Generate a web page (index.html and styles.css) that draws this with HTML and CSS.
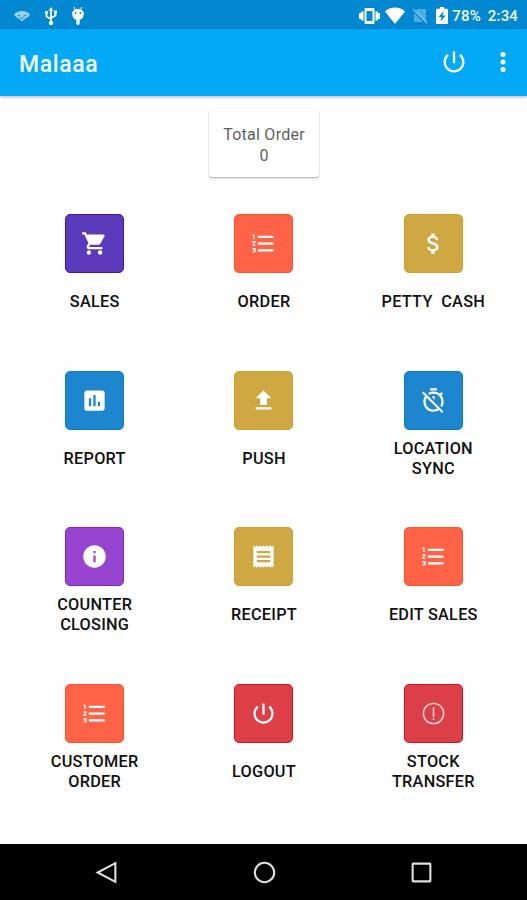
FILE: index.html
```html
<!DOCTYPE html>
<html lang="en">
<head>
  <meta charset="utf-8">
  <meta name="viewport" content="width=device-width, initial-scale=1">
  <title>Malaaa</title>
  <link rel="stylesheet" href="styles.css">
</head>
<body>
  <svg class="defs" width="0" height="0">
    <symbol id="power" viewBox="0 0 24 24"><path d="M13 3h-2v10h2V3zm4.83 2.17l-1.42 1.42C17.99 7.86 19 9.81 19 12c0 3.87-3.13 7-7 7s-7-3.13-7-7c0-2.19 1.01-4.14 2.58-5.42L6.17 5.17C4.23 6.82 3 9.26 3 12c0 4.97 4.03 9 9 9s9-4.03 9-9c0-2.74-1.23-5.18-3.17-6.83z"/></symbol>
    <symbol id="list" viewBox="0 0 24 24"><path d="M2 17h2v.5H3v1h1v.5H2v1h3v-4H2v1zm1-9h1V4H2v1h1v3zm-1 3h1.8L2 13.1v.9h3v-1H3.2L5 10.9V10H2v1zm5-6v2h14V5H7zm0 14h14v-2H7v2zm0-6h14v-2H7v2z"/></symbol>
  </svg>

  <div class="status-bar">
    <div class="status-left">
      <svg class="eye" width="18" height="14" viewBox="0 0 18 14"><path d="M1 5.5C4 .8 14 .8 17 5.5L14.5 8.5 12 9.5 9 12.5 6 9.5 3.5 8.5z"/><path class="eye-line" d="M5 6.2l2.500 1M13 6.2l-2.500 1M7.500 9.2h3"/></svg>
      <svg class="usb" width="14" height="20" viewBox="0 0 14 20"><path class="line" d="M7 4v13M2.5 6v4.5L7 13M11.5 6v3.5L7 12"/><path d="M7 1l2.4 4H4.6z"/><circle cx="7" cy="17" r="2.2"/><circle cx="2.5" cy="6.3" r="1.6"/><path d="M10 4.5h3v3h-3z"/></svg>
      <svg class="droid" width="14" height="20" viewBox="0 0 14 20"><path class="line thin" d="M3 1l1.5 3M11 1L9.5 4"/><path d="M1.2 7.5C1.2 1.5 12.8 1.5 12.8 7.5C12.8 11.5 10.5 13.5 8.7 13.5V18L7 19.2 5.3 18V13.5C3.5 13.5 1.2 11.5 1.2 7.5z"/><circle class="hole" cx="4.6" cy="7" r=".9"/><circle class="hole" cx="9.4" cy="7" r=".9"/></svg>
    </div>
    <div class="status-right">
      <svg class="vibrate" width="21" height="16" viewBox="0 0 21 16"><path d="M0 5h2v6H0zM2 3.500h2.500v9H2zM19 5h2v6h-2zM16.500 3.500H19v9h-2.500z"/><path fill-rule="evenodd" d="M6.5 0h8a1 1 0 0 1 1 1v14a1 1 0 0 1-1 1h-8a1 1 0 0 1-1-1V1a1 1 0 0 1 1-1zM7.5 3v10h6V3z"/></svg>
      <svg class="wifi" width="20" height="17" viewBox="0 0 20 17"><path d="M10 17L0 4.5C5-1 15-1 20 4.500z"/></svg>
      <svg class="no-sim" width="16" height="16" viewBox="0 0 16 16"><path class="faded" d="M5.5 1H14v12.5L3.5 3z"/><path class="faded" d="M2 5l9 9H2z"/><path class="line slash" d="M1 1l14 14"/></svg>
      <svg class="battery" width="12" height="17" viewBox="0 0 12 17"><path fill-rule="evenodd" d="M4 0h4v1.8h3a1 1 0 0 1 1 1V16a1 1 0 0 1-1 1H1a1 1 0 0 1-1-1V2.8a1 1 0 0 1 1-1h3zM7.6 4L2.5 10h3l-1 4.500L9.7 8.5h-3z"/></svg>
      <span class="percent">78%</span>
      <span class="clock">2:34</span>
    </div>
  </div>

  <header class="app-bar">
    <h1>Malaaa</h1>
    <svg class="action" width="28" height="28"><use href="#power"/></svg>
    <svg class="more" width="8" height="22" viewBox="0 0 8 22"><circle cx="4" cy="3.6" r="2.5"/><circle cx="4" cy="11" r="2.5"/><circle cx="4" cy="18.4" r="2.5"/></svg>
  </header>

  <main class="content">
    <div class="total-card">
      <div>Total Order</div>
      <div>0</div>
    </div>

    <div class="menu">
      <div class="menu-item">
        <div class="tile indigo"><svg viewBox="0 0 24 24"><path d="M7 18c-1.1 0-1.99.9-1.99 2S5.9 22 7 22s2-.9 2-2-.9-2-2-2zM1 2v2h2l3.6 7.59-1.35 2.45c-.16.28-.25.61-.25.96 0 1.1.9 2 2 2h12v-2H7.42c-.14 0-.25-.11-.25-.25l.03-.12.9-1.63h7.45c.75 0 1.41-.41 1.75-1.03l3.58-6.49A1 1 0 0 0 20 4H5.21l-.94-2H1zm16 16c-1.1 0-1.99.9-1.99 2s.89 2 1.99 2 2-.9 2-2-.9-2-2-2z"/></svg></div>
        <div class="label">SALES</div>
      </div>
      <div class="menu-item">
        <div class="tile orange"><svg><use href="#list"/></svg></div>
        <div class="label">ORDER</div>
      </div>
      <div class="menu-item">
        <div class="tile gold"><svg viewBox="0 0 24 24"><path d="M11.8 10.9c-2.27-.59-3-1.2-3-2.15 0-1.09 1.01-1.85 2.7-1.85 1.78 0 2.44.85 2.5 2.1h2.21c-.07-1.72-1.12-3.3-3.21-3.81V3h-3v2.16c-1.94.42-3.5 1.68-3.5 3.61 0 2.31 1.91 3.46 4.7 4.13 2.5.6 3 1.48 3 2.41 0 .69-.49 1.79-2.7 1.79-2.06 0-2.87-.92-2.98-2.1h-2.2c.12 2.19 1.76 3.42 3.68 3.83V21h3v-2.15c1.95-.37 3.5-1.5 3.5-3.55 0-2.84-2.43-3.81-4.7-4.4z"/></svg></div>
        <div class="label">PETTY&nbsp; CASH</div>
      </div>

      <div class="menu-item">
        <div class="tile blue"><svg viewBox="0 0 24 24"><path d="M19 3H5c-1.1 0-2 .9-2 2v14c0 1.1.9 2 2 2h14c1.1 0 2-.9 2-2V5c0-1.1-.9-2-2-2zM9 17H7v-7h2v7zm4 0h-2V7h2v10zm4 0h-2v-4h2v4z"/></svg></div>
        <div class="label">REPORT</div>
      </div>
      <div class="menu-item">
        <div class="tile gold"><svg viewBox="0 0 24 24"><path d="M9 16h6v-6h4l-7-7-7 7h4zm-4 2h14v2H5z"/></svg></div>
        <div class="label">PUSH</div>
      </div>
      <div class="menu-item">
        <div class="tile blue"><svg viewBox="0 0 24 24"><path d="M19.04 4.55l-1.42 1.42C16.07 4.74 14.12 4 12 4c-1.83 0-3.53.55-4.95 1.48l1.46 1.46C9.53 6.35 10.73 6 12 6c3.87 0 7 3.13 7 7 0 1.27-.35 2.47-.94 3.49l1.45 1.45C20.45 16.53 21 14.83 21 13c0-2.12-.74-4.07-1.97-5.61l1.42-1.42-1.41-1.42zM15 1H9v2h6V1zm-4 8.44l2 2V8h-2v1.44zM3.02 4L1.75 5.27 4.5 8.03C3.55 9.45 3 11.16 3 13c0 4.97 4.02 9 9 9 1.84 0 3.55-.55 4.98-1.5l2.5 2.5 1.27-1.27-7.71-7.71L3.02 4zM12 20c-3.87 0-7-3.13-7-7 0-1.28.35-2.48.95-3.52l9.56 9.56c-1.03.61-2.23.96-3.51.96z"/></svg></div>
        <div class="label">LOCATION<br>SYNC</div>
      </div>

      <div class="menu-item">
        <div class="tile violet"><svg viewBox="0 0 24 24"><path d="M12 2C6.48 2 2 6.48 2 12s4.48 10 10 10 10-4.48 10-10S17.52 2 12 2zm1 15h-2v-6h2v6zm0-8h-2V7h2v2z"/></svg></div>
        <div class="label">COUNTER<br>CLOSING</div>
      </div>
      <div class="menu-item">
        <div class="tile gold"><svg viewBox="0 0 24 24"><path d="M18 17H6v-2h12v2zm0-4H6v-2h12v2zm0-4H6V7h12v2zM3 22l1.5-1.5L6 22l1.5-1.5L9 22l1.5-1.5L12 22l1.5-1.5L15 22l1.5-1.5L18 22l1.5-1.5L21 22V2l-1.5 1.5L18 2l-1.5 1.5L15 2l-1.5 1.5L12 2l-1.5 1.5L9 2 7.5 3.5 6 2 4.5 3.5 3 2v20z"/></svg></div>
        <div class="label">RECEIPT</div>
      </div>
      <div class="menu-item">
        <div class="tile orange"><svg><use href="#list"/></svg></div>
        <div class="label">EDIT SALES</div>
      </div>

      <div class="menu-item">
        <div class="tile orange"><svg><use href="#list"/></svg></div>
        <div class="label">CUSTOMER<br>ORDER</div>
      </div>
      <div class="menu-item">
        <div class="tile red"><svg><use href="#power"/></svg></div>
        <div class="label">LOGOUT</div>
      </div>
      <div class="menu-item">
        <div class="tile red"><svg class="alert" viewBox="0 0 24 24"><circle cx="12" cy="12" r="9"/><path d="M12 6.500v8.500M12 16v1.700"/></svg></div>
        <div class="label">STOCK<br>TRANSFER</div>
      </div>
    </div>
  </main>

  <nav class="nav-bar">
    <svg viewBox="0 0 24 24"><path d="M20.5 3v18L3.500 12z"/></svg>
    <svg viewBox="0 0 24 24"><circle cx="12" cy="12" r="9.3"/></svg>
    <svg viewBox="0 0 24 24"><rect x="3.5" y="3.5" width="17" height="17" rx=".5"/></svg>
  </nav>
</body>
</html>
```

FILE: styles.css
```css
body {
  margin: 0;
  height: 900px;
  display: flex;
  flex-direction: column;
  overflow: hidden;
  background: #fefefe;
  font-family: Roboto, "Noto Sans", sans-serif;
}

svg {
  display: block;
  fill: #fff;
}

.defs {
  display: none;
}

.line {
  fill: none;
  stroke: #fff;
  stroke-width: 1.8;
}

.thin {
  stroke-width: 1;
}

/* status bar */
.status-bar {
  height: 29px;
  flex: none;
  display: flex;
  justify-content: space-between;
  align-items: center;
  padding: 2px 9px 0 13px;
  box-sizing: border-box;
  background: #0288d1;
  color: #f2faff;
}

.status-left,
.status-right {
  display: flex;
  align-items: center;
}

.status-left {
  gap: 13px;
}

.eye {
  opacity: 0.6;
}

.eye-line {
  fill: none;
  stroke: #0288d1;
}

.hole {
  fill: #0288d1;
}

.wifi {
  margin-left: 5px;
}

.no-sim {
  margin-left: 7px;
}

.faded {
  opacity: 0.3;
}

.slash {
  stroke-width: 1.3;
  opacity: 0.5;
}

.battery {
  margin-left: 8px;
}

.percent,
.clock {
  font-size: 15px;
  font-weight: 500;
  letter-spacing: 0.15px;
}

.percent {
  margin-left: 4px;
}

.clock {
  margin-left: 7px;
}

/* app bar */
.app-bar {
  height: 67px;
  flex: none;
  display: flex;
  align-items: center;
  padding: 0 20px 1px 19px;
  box-sizing: border-box;
  background: #03a9f4;
  box-shadow: 0 1px 3px rgba(90, 40, 30, 0.4);
}

.app-bar h1 {
  flex: 1;
  margin: 4px 0 0;
  font-size: 23px;
  font-weight: 500;
  letter-spacing: 0.6px;
  color: #f4fcff;
}

.more {
  margin-left: 31px;
}

/* content */
.content {
  flex: 1;
  display: flex;
  flex-direction: column;
  align-items: center;
  padding: 13px 9px 0 10px;
}

.total-card {
  width: 110px;
  height: 68px;
  padding-top: 15px;
  box-sizing: border-box;
  border-radius: 3px;
  background: #fff;
  box-shadow: 0 1px 2px rgba(0, 0, 0, 0.35);
  color: #606060;
  font-size: 16px;
  line-height: 21px;
  letter-spacing: 0.25px;
  text-align: center;
}

.menu {
  width: 100%;
  margin-top: 37px;
  display: grid;
  grid-template-columns: repeat(3, 1fr);
  grid-auto-rows: 156.5px;
}

.menu-item {
  display: flex;
  flex-direction: column;
  align-items: center;
}

.tile {
  width: 59px;
  height: 59px;
  box-sizing: border-box;
  display: flex;
  justify-content: center;
  align-items: center;
  border: 1px solid;
  border-radius: 5px;
}

.tile svg {
  width: 27px;
  height: 27px;
}

.indigo {
  background: #5c38ba;
  border-color: #4316ab;
}

.orange {
  background: #ff6347;
  border-color: #fb5528;
}

.gold {
  background: #cfa743;
  border-color: #cda12b;
}

.blue {
  background: #1c87cf;
  border-color: #117bc8;
}

.violet {
  background: #9745d0;
  border-color: #8523c2;
}

.red {
  background: #dc3f48;
  border-color: #cf1421;
}

.alert {
  fill: none;
  stroke: #ffd9dc;
  stroke-width: 1.3;
}

.label {
  height: 40px;
  margin-top: 9px;
  display: flex;
  align-items: center;
  color: #111;
  font-size: 16.3px;
  font-weight: 500;
  line-height: 20px;
  letter-spacing: 0.25px;
  text-align: center;
}

/* navigation bar */
.nav-bar {
  height: 56px;
  flex: none;
  display: flex;
  justify-content: center;
  align-items: center;
  gap: 132.5px;
  padding-left: 1px;
  background: #000;
}

.nav-bar svg {
  width: 25px;
  height: 25px;
  fill: none;
  stroke: #e0e0e0;
  stroke-width: 2;
}
```
